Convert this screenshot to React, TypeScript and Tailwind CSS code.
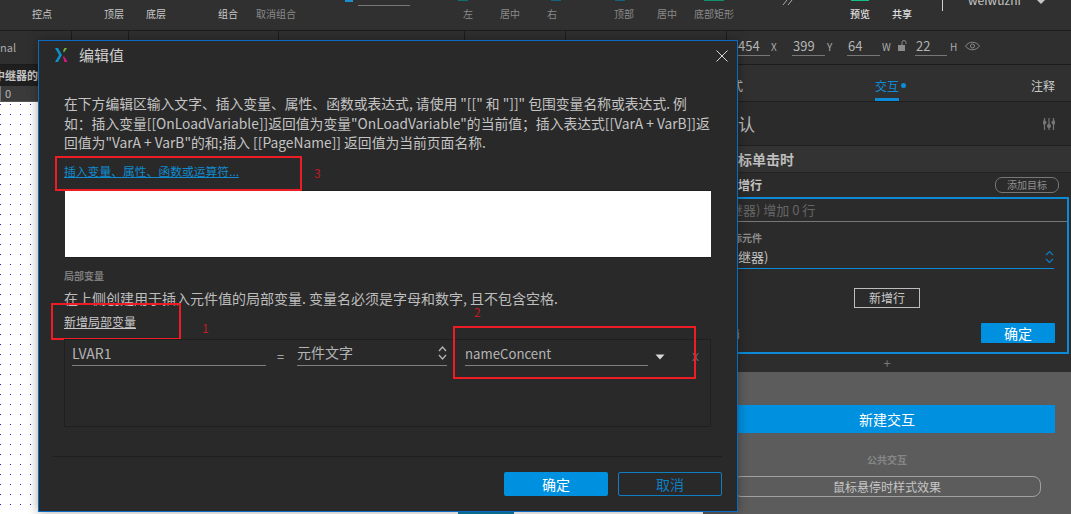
import React from "react";

const cjk = { fontFamily: '"Noto Sans CJK SC", "Liberation Sans", sans-serif' };

const ToolLabel = ({ x, children, dim, bright }: { x: string; children: React.ReactNode; dim?: boolean; bright?: boolean }) => (
  <span className={`${x} text-[10px] leading-none ${dim ? "text-[#8a8a8a]" : bright ? "text-[#e0e0e0] font-medium" : "text-[#c9c9c9]"}`}>{children}</span>
);

const Field = ({ value, label, w, lw, lp }: { value: string; label: string; w: string; lw: string; lp: string }) => (
  <div className="flex items-start -mt-[3px]">
    <span className={`${w} h-[19px] border-b border-[#777] text-[13px] leading-[18px] text-[#b5b5b5] pl-[1px]`}>{value}</span>
    <span className={`${lw} ${lp} text-[10px] leading-[19px] text-[#aaa]`}>{label}</span>
  </div>
);

const Modal = () => (
  <div className="absolute left-[38px] top-[40px] w-[700px] h-[472px] bg-[#292929] border border-[#0a6cc0] shadow-[0_0_10px_rgba(0,0,0,0.35)] flex flex-col">
    <div className="h-[28px] flex items-center pl-[15px] shrink-0 relative">
      <svg width="14" height="16" viewBox="0 0 14 16">
        <path d="M1 1 L4 1 L8 8 L5 8 Z" fill="#0e8fc6" />
        <path d="M5 8 L8 8 L4 15 L1 15 Z" fill="#0e8fc6" />
        <path d="M10.5 1 L13 1 L10 5.5 L9 4 Z" fill="#6cb33f" />
        <path d="M9 10 L10 9 L13.5 15 L10.5 15 Z" fill="#d81b7a" />
      </svg>
      <span className="ml-[11px] text-[15px] text-[#cfcfcf]">编辑值</span>
      <svg className="absolute left-[677px] top-[9px]" width="12" height="12" viewBox="0 0 12 12" stroke="#d8d8d8" strokeWidth="1">
        <path d="M0.5 0.5 L11.5 11.5 M11.5 0.5 L0.5 11.5" />
      </svg>
    </div>

    <div className="pl-[25px] pt-[25px] text-[13.8px] leading-[19.5px] text-[#c4c4c4] whitespace-nowrap">
      <p>
        在下方编辑区输入文字、插入变量、属性、函数或表达式, 请使用 "[[" 和 "]]" 包围变量名称或表达式. 例
        <br />
        如：插入变量[[OnLoadVariable]]返回值为变量"OnLoadVariable"的当前值；插入表达式[[VarA + VarB]]返
        <br />
        回值为"VarA + VarB"的和;插入 [[PageName]] 返回值为当前页面名称.
      </p>
    </div>

    <div className="relative pl-[25px] mt-[8px] h-[19px]">
      <span className="text-[11.8px] leading-[19px] text-[#0f8bd0] underline block">插入变量、属性、函数或运算符...</span>
      <div className="absolute left-[16px] top-[-5px] w-[247px] h-[35px] border-2 border-[#ee1c25]" />
      <span className="absolute left-[275px] top-[4px] text-[12px] leading-[16px] text-[#c01c24]">3</span>
    </div>

    <div className="ml-[26px] mr-[26px] mt-[10px] h-[68px] bg-white shrink-0 border-t border-b border-[#1f1f1f]" />

    <div className="pl-[25px] mt-[11px] text-[10px] leading-[14px] text-[#7d7d7d] font-bold">局部变量</div>
    <div className="pl-[25px] mt-[5px] text-[14px] leading-[20px] text-[#bdbdbd] whitespace-nowrap">
      在上侧创建用于插入元件值的局部变量. 变量名必须是字母和数字, 且不包含空格.
    </div>

    <div className="relative pl-[25px] mt-[3px] h-[22px]">
      <span className="text-[12px] leading-[22px] text-[#c8c8c8] underline block">新增局部变量</span>
      <div className="absolute left-[12px] top-[-8px] w-[130px] h-[37px] border-2 border-[#ee1c25]" />
      <span className="absolute left-[163px] top-[9px] text-[12px] leading-[16px] text-[#c01c24]">1</span>
    </div>

    <div className="relative ml-[25px] mr-[26px] mt-[6px] h-[88px] border border-[#1f1f1f] flex items-start shrink-0">
      <span className="ml-[7px] mt-[1px] w-[194px] h-[25px] border-b border-[#808080] text-[14px] leading-[24px] text-[#b5b5b5]">LVAR1</span>
      <span className="ml-[11px] mt-[7px] w-[20px] text-[13px] leading-[20px] text-[#bbb]">=</span>
      <div className="mt-[1px] w-[150px] h-[25px] border-b border-[#808080] flex items-center text-[14px] text-[#b5b5b5]">
        元件文字
        <svg className="ml-auto" width="9" height="16" viewBox="0 0 9 16" fill="none" stroke="#b5b5b5" strokeWidth="1.3">
          <path d="M1 6 L4.5 2 L8 6 M1 10 L4.5 14 L8 10" />
        </svg>
      </div>
      <span className="ml-[18px] mt-[1px] w-[183px] h-[25px] border-b border-[#808080] text-[13.2px] leading-[25px] text-[#b5b5b5]">nameConcent</span>
      <svg className="ml-[7px] mt-[14px]" width="10" height="6" viewBox="0 0 10 6">
        <path d="M0.5 0.5 L9.5 0.5 L5 5.5 Z" fill="#d8d8d8" />
      </svg>
      <span className="ml-[27px] mt-[6px] text-[14px] leading-[18px] text-[#666]">x</span>
      <div className="absolute left-[388px] top-[-14px] w-[243px] h-[53px] border-2 border-[#ee1c25]" />
      <span className="absolute left-[409px] top-[-36px] text-[12px] leading-[16px] text-[#c01c24]">2</span>
    </div>

    <div className="ml-[14px] mr-[15px] mt-[29px] border-t border-[#1f1f1f]" />
    <div className="flex justify-end gap-[10px] pr-[15px] mt-[15px]">
      <span className="w-[104px] h-[24px] rounded-[2px] bg-[#0090e0] text-center text-[14px] leading-[24px] text-white">确定</span>
      <span className="w-[104px] h-[24px] rounded-[2px] border border-[#0e7fc2] text-center text-[14px] leading-[22px] text-[#0e7fc2]">取消</span>
    </div>
  </div>
);

const RightPanel = () => (
  <div className="w-[368px] shrink-0 flex flex-col bg-[#2b2b2b] text-[#c4c4c4]">
    <div className="h-[37px] flex items-start pt-[12px] border-b border-[#1f1f1f] bg-[#303030]">
      <span className="ml-[15px] text-[12.5px] leading-[18px] text-[#bbb]">样式</span>
      <span className="ml-[132px] text-[12px] leading-[18px] h-[24px] text-[#0d8bd6] border-b-[3px] border-[#0d8bd6]">交互</span>
      <span className="ml-[2px] mt-[6px] w-[5px] h-[5px] rounded-full bg-[#0d8bd6]" />
      <span className="ml-auto mr-[16px] text-[12px] leading-[18px] text-[#c9c9c9]">注释</span>
    </div>
    <div className="h-[44px] flex items-center border-b border-[#1f1f1f]">
      <span className="ml-[18px] text-[17px] text-[#b8b8b8]">默认</span>
      <svg className="ml-auto mr-[16px]" width="12" height="12" viewBox="0 0 12 12" stroke="#777" strokeWidth="1.2" fill="#777">
        <path d="M1.5 0 V12 M6 0 V12 M10.5 0 V12" />
        <circle cx="1.5" cy="4.5" r="1.5" />
        <circle cx="6" cy="8" r="1.5" />
        <circle cx="10.5" cy="4.5" r="1.5" />
      </svg>
    </div>
    <div className="h-[27px] bg-[#333] border-b border-[#222] flex items-center text-[14px] font-bold text-[#bdbdbd] pl-[21px]">鼠标单击时</div>
    <div className="h-[24px] flex items-center text-[12px] font-bold text-[#c4c4c4] pl-[23px]">
      <span>新增行</span>
      <span className="ml-auto mr-[12px] w-[64px] h-[16px] border border-[#777] rounded-[7px] text-center text-[10px] leading-[14px] font-normal text-[#8f8f8f]">添加目标</span>
    </div>
    <div className="h-[157px] ml-[15px] mr-[2px] border-2 border-[#0c8ad6] flex flex-col">
      <div className="h-[23px] border-b border-[#777] text-[13px] leading-[21px] text-[#666] pl-[10px]">继器) 增加 0 行</div>
      <div className="mt-[9px] pl-[2px] text-[10px] leading-[14px] font-bold text-[#8d8d8d]">目标元件</div>
      <div className="mt-[1px] mr-[13px] h-[23px] border-b border-[#0c8ad6] flex items-center justify-between text-[13px] text-[#c4c4c4] pl-[18px]">
        继器)
        <svg width="9" height="14" viewBox="0 0 9 14" fill="none" stroke="#0c7fc4" strokeWidth="1.2">
          <path d="M1 5 L4.5 1.5 L8 5 M1 9 L4.5 12.5 L8 9" />
        </svg>
      </div>
      <div className="mt-[19px] ml-[134px] w-[66px] h-[20px] border border-[#bdbdbd] text-center text-[12px] leading-[18px] text-[#c9c9c9]">新增行</div>
      <div className="mt-[15px] mr-[12px] flex items-center justify-between">
        <span className="text-[10px] text-[#888]">取消</span>
        <span className="w-[74px] h-[20px] rounded-[1px] bg-[#0090e0] text-center text-[14px] leading-[20px] text-white">确定</span>
      </div>
    </div>
    <div className="h-[18px] flex items-center justify-center text-[#777] text-[13px] bg-[#2d2d2d]">+</div>
    <div className="flex-1 bg-[#5c5c5c] flex flex-col items-center">
      <div className="mt-[33px] w-[336px] h-[28px] bg-[#0090e0] rounded-[1px] text-center text-[14px] leading-[28px] text-white">新建交互</div>
      <div className="mt-[20px] text-[10px] leading-[14px] font-bold text-[#868686]">公共交互</div>
      <div className="mt-[9px] w-[308px] h-[21px] border border-[#a0a0a0] rounded-[8px] text-center text-[12px] leading-[19px] text-[#c6c6c6]">鼠标悬停时样式效果</div>
    </div>
  </div>
);

export default function App() {
  return (
    <div style={cjk} className="relative w-[1071px] h-[514px] overflow-hidden bg-[#2b2b2b] flex flex-col">
      <div className="h-[31px] shrink-0 bg-[#303030] border-b border-[#1c1c1c] relative flex items-start pt-[9px]">
        <ToolLabel x="ml-[32px]">控点</ToolLabel>
        <ToolLabel x="ml-[52px]">顶层</ToolLabel>
        <ToolLabel x="ml-[22px]">底层</ToolLabel>
        <ToolLabel x="ml-[52px]">组合</ToolLabel>
        <ToolLabel x="ml-[18px]" dim>取消组合</ToolLabel>
        <ToolLabel x="ml-[167px]" dim>左</ToolLabel>
        <ToolLabel x="ml-[27px]" dim>居中</ToolLabel>
        <ToolLabel x="ml-[27px]" dim>右</ToolLabel>
        <ToolLabel x="ml-[57px]" dim>顶部</ToolLabel>
        <ToolLabel x="ml-[23px]" dim>居中</ToolLabel>
        <ToolLabel x="ml-[17px]" dim>底部矩形</ToolLabel>
        <ToolLabel x="ml-[116px]" bright>预览</ToolLabel>
        <ToolLabel x="ml-[22px]" bright>共享</ToolLabel>
        <div className="absolute left-[358px] top-0 w-[52px] h-[6px] border-b border-[#777]" />
        <div className="absolute left-[345px] top-0 w-[8px] h-[2px] bg-[#1a8fd0]" />
        <div className="absolute left-[458px] top-0 w-[10px] h-[1px] bg-[#0f6f6a]" />
        <div className="absolute left-[551px] top-0 w-[10px] h-[1px] bg-[#14607f]" />
        <div className="absolute left-[615px] top-0 w-[10px] h-[1px] bg-[#14607f]" />
        <div className="absolute left-[704px] top-0 w-[20px] h-[1px] bg-[#0f8f6a]" />
        <div className="absolute left-[851px] top-0 w-[18px] h-[1px] bg-[#12c08a]" />
        <svg className="absolute left-[782px] top-0" width="12" height="5" viewBox="0 0 12 5" fill="none" stroke="#aaa">
          <path d="M1 5 L5 0 M6 5 L10 0" />
        </svg>
        <div className="absolute left-[942px] top-0 w-px h-[11px] bg-[#d0d0d0]" />
        <span className="absolute left-[968px] top-[-8px] text-[12px] leading-[16px] text-[#c4c4c4]">weiwuzhi</span>
        <svg className="absolute left-[1037px] top-0" width="8" height="4" viewBox="0 0 8 4">
          <path d="M0 0 H8 L4 4 Z" fill="#c4c4c4" />
        </svg>
      </div>

      <div className="h-[34px] shrink-0 flex items-center border-b border-[#1c1c1c] bg-[#2f2f2f]">
        <div className="w-[72px] h-full border-r border-[#1c1c1c] text-[11px] text-[#aaa] leading-[33px]">nal</div>
        <div className="w-[57px] h-full border-r border-[#1c1c1c]" />
        <div className="w-[150px] h-full border-r border-[#1c1c1c]" />
        <div className="w-[186px] h-full border-r border-[#1c1c1c]" />
        <div className="w-[101px] h-full border-r border-[#1c1c1c]" />
        <div className="w-[161px] h-full border-r border-[#1c1c1c]" />
        <div className="flex items-center ml-[8px]">
          <Field value="454" label="X" w="w-[35px] pl-[3px]" lw="w-[22px]" lp="pl-[1px]" />
          <Field value="399" label="Y" w="w-[33px]" lw="w-[22px]" lp="pl-[2px]" />
          <Field value="64" label="W" w="w-[33px]" lw="w-[18px]" lp="pl-[2px]" />
          <svg width="9" height="12" viewBox="0 0 9 12" fill="#8a8a8a" className="mr-[8px] -mt-[3px]">
            <rect x="0" y="5" width="7" height="6" />
            <path d="M4 5 V2.5 A2 2 0 0 1 8 2.5 V4" fill="none" stroke="#8a8a8a" />
          </svg>
          <Field value="22" label="H" w="w-[32px]" lw="w-[18px]" lp="pl-[3px]" />
          <svg width="15" height="10" viewBox="0 0 15 10" fill="none" stroke="#8a8a8a" className="-mt-[3px]">
            <path d="M0.5 5 C4 0 11 0 14.5 5 C11 10 4 10 0.5 5 Z" />
            <circle cx="7.5" cy="5" r="2" />
          </svg>
        </div>
      </div>

      <div className="flex-1 flex min-h-0">
        <div className="w-[703px] shrink-0 flex flex-col relative">
          <div className="h-[21px] bg-[#1f1f1f] text-[11px] leading-[21px] font-bold text-[#c4c4c4] whitespace-nowrap overflow-hidden">
            <span className="block -ml-[6px]">中继器的操作</span>
          </div>
          <div className="h-[16px] bg-[#3a3a3a] border-b border-[#555] text-[11px] leading-[15px] text-[#bbb] pl-[4px] border-l border-l-[#777]">0</div>
          <div className="flex-1 bg-white bg-[radial-gradient(circle_at_5.5px_5.5px,#2020c0_0.7px,transparent_0.8px)] bg-[length:10px_10px] bg-[position:5px_-3px]" />
          <div className="absolute left-[458px] bottom-0 w-[56px] h-[2px] bg-[#0f7fa8]" />
        </div>
        <RightPanel />
      </div>

      <Modal />
    </div>
  );
}
